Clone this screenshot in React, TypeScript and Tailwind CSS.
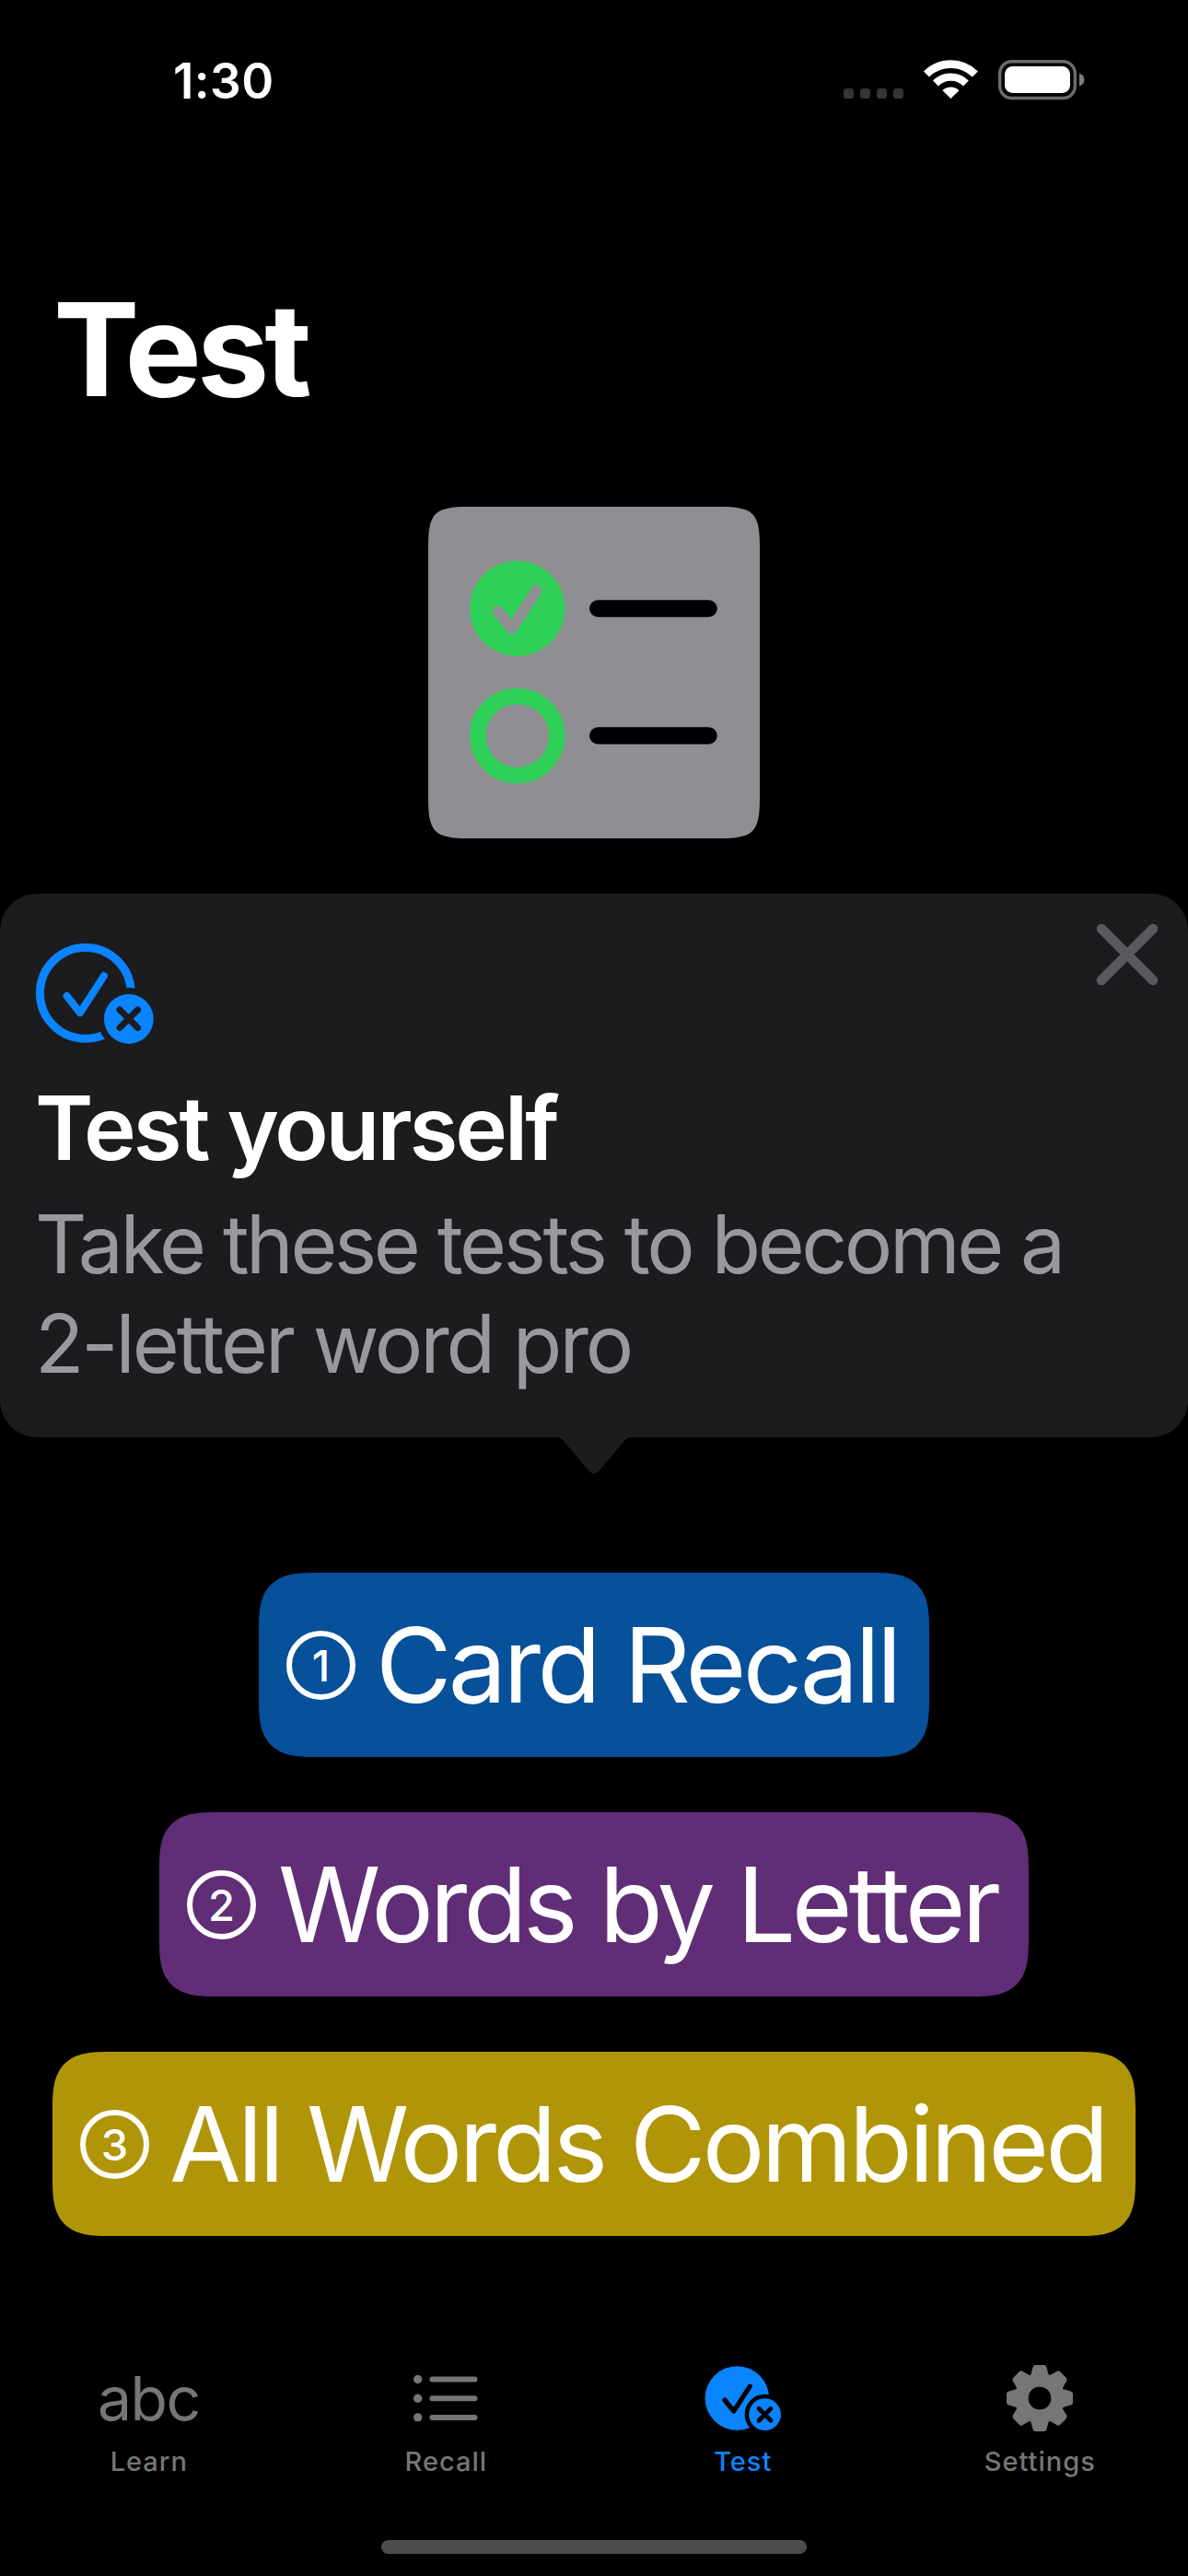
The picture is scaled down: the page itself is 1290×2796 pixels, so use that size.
import type { ReactNode } from 'react'

const StatusBar = () => (
  <div className="flex h-[176px] shrink-0 items-center justify-between pl-[188px] pr-[112px]">
    <span className="text-[53px] leading-[60px] font-semibold tracking-[0.4px]">1:30</span>
    <svg width="264" height="48" viewBox="914 64 264 48">
      {[916, 934, 952, 970].map((x) => (
        <rect key={x} x={x} y="96" width="11" height="11" rx="3.6" fill="#353535" />
      ))}
      <g fill="none" stroke="#fff">
        <path d="M1005.95 80.55A37.4 37.4 0 0 1 1058.85 80.55" strokeWidth="8.6" />
        <path d="M1015.9 90.5A23.3 23.3 0 0 1 1048.9 90.5" strokeWidth="8.2" />
      </g>
      <path d="M1032.4 107L1023.4 98.2A13 13 0 0 1 1041.4 98.2Z" fill="#fff" />
      <rect x="1085.7" y="66.7" width="81.6" height="39.8" rx="13" fill="none" stroke="#6b6b6b" strokeWidth="3.4" />
      <rect x="1091" y="72" width="71" height="29" rx="8.5" fill="#fff" />
      <path d="M1172 79.7a7 7 0 0 1 0 13.6z" fill="#7c7c7c" />
    </svg>
  </div>
)

const ChecklistIcon = () => (
  <svg width="360" height="360" viewBox="0 0 360 360">
    <path
      d="M44 0H316C353.3 0 360 6.7 360 44V316C360 353.3 353.3 360 316 360H44C6.7 360 0 353.3 0 316V44C0 6.7 6.7 0 44 0Z"
      fill="#8e8e93"
    />
    <circle cx="96.7" cy="110.4" r="51.7" fill="#30d158" />
    <path d="M75.7 113.8L90.8 132L117.3 91.2" fill="none" stroke="#8e8e93" strokeWidth="12" strokeLinecap="round" strokeLinejoin="round" />
    <circle cx="96.7" cy="248.6" r="43" fill="none" stroke="#30d158" strokeWidth="17.4" />
    <rect x="175" y="101.2" width="138.8" height="18.6" rx="9.3" fill="#000" />
    <rect x="175" y="239.2" width="138.8" height="18.6" rx="9.3" fill="#000" />
  </svg>
)

const TestOutlineIcon = () => (
  <svg width="132" height="120" viewBox="38 1020 132 120">
    <mask id="outline-cut">
      <rect x="38" y="1020" width="132" height="120" fill="#fff" />
      <circle cx="139.8" cy="1106" r="34" fill="#000" />
    </mask>
    <circle cx="92.8" cy="1077.9" r="49.4" fill="none" stroke="#0a84ff" strokeWidth="9" mask="url(#outline-cut)" />
    <path d="M72.6 1081L86.9 1099.3L112.9 1059.2" fill="none" stroke="#0a84ff" strokeWidth="8" strokeLinecap="round" strokeLinejoin="round" />
    <circle cx="139.8" cy="1106" r="26.9" fill="#0a84ff" />
    <path d="M130 1096L149.6 1115.6M149.6 1096L130 1115.6" stroke="#1c1c1e" strokeWidth="7" strokeLinecap="round" />
  </svg>
)

const TipCard = () => (
  <section className="relative mt-[60px] h-[590px] rounded-[40px] bg-[#1c1c1e] pt-[50px] pl-[38px]">
    <TestOutlineIcon />
    <h2 className="mt-[24px] text-[96px] leading-[120px] font-semibold tracking-[-3px]">Test yourself</h2>
    <p className="mt-[12px] text-[87.5px] leading-[108px] tracking-[-3.4px] text-[#98989f]">
      Take these tests to become a
      <br />
      <span className="tracking-[-3px]">2-letter word pro</span>
    </p>
    <button className="absolute top-[32px] right-[32px]" aria-label="Close">
      <svg width="68" height="68" viewBox="0 0 68 68">
        <path d="M6 6L62 62M62 6L6 62" stroke="#5a5a5e" strokeWidth="10.6" strokeLinecap="round" />
      </svg>
    </button>
    <svg className="absolute top-[589px] left-[605px]" width="80" height="42" viewBox="0 0 80 42">
      <path d="M0 0V1Q4 1 6.5 4.5L34 37Q40 44 46 37L73.5 4.5Q76 1 80 1V0Z" fill="#1c1c1e" />
    </svg>
  </section>
)

const tests = [
  { n: 1, title: 'Card Recall', style: 'w-[728px] bg-[#07509a] tracking-[-3.7px]', gap: 'ml-[22px]' },
  { n: 2, title: 'Words by Letter', style: 'w-[944px] bg-[#602d76] tracking-[-4.3px]', gap: 'ml-[24px]' },
  { n: 3, title: 'All Words Combined', style: 'w-[1176px] bg-[#b19508] tracking-[-3.9px]', gap: 'ml-[22px]' },
]

const TestButton = ({ n, title, style, gap }: (typeof tests)[number]) => (
  <button
    className={`flex h-[200px] items-center rounded-[47px] pl-[30px] text-[113px] leading-[140px] whitespace-nowrap supports-[corner-shape:squircle]:rounded-[64px] supports-[corner-shape:squircle]:[corner-shape:superellipse(1.6)] ${style}`}
  >
    <span className="flex size-[75px] shrink-0 items-center justify-center rounded-full border-[6px] border-white text-[47px] leading-none font-medium tracking-normal">
      {n}
    </span>
    <span className={gap}>{title}</span>
  </button>
)

const ListIcon = () => (
  <svg width="72" height="50" viewBox="447.75 2578.5 72 50" fill="#767676">
    {[2583, 2603.7, 2624.4].map((y) => (
      <g key={y}>
        <circle cx="453.4" cy={y} r="4.7" />
        <rect x="466.2" y={y - 3} width="52" height="6" rx="3" />
      </g>
    ))}
  </svg>
)

const TestFilledIcon = () => (
  <svg width="88" height="80" viewBox="762.25 2563.5 88 80">
    <mask id="filled-cut">
      <rect x="762" y="2563" width="89" height="81" fill="#fff" />
      <circle cx="830.8" cy="2621.2" r="22" fill="#000" />
      <path d="M787.2 2605.5L797 2617.7L814.5 2590.7" fill="none" stroke="#000" strokeWidth="5.2" strokeLinecap="round" strokeLinejoin="round" />
    </mask>
    <circle cx="800.6" cy="2603.5" r="34.8" fill="#0a84ff" mask="url(#filled-cut)" />
    <circle cx="830.8" cy="2621.2" r="17.4" fill="#0a84ff" />
    <path d="M824.3 2614.7L837.3 2627.7M837.3 2614.7L824.3 2627.7" stroke="#000" strokeWidth="4.8" strokeLinecap="round" />
  </svg>
)

const GearIcon = () => (
  <svg width="76" height="76" viewBox="-38 -38 76 76" fill="#767676">
    {[0, 45, 90, 135, 180, 225, 270, 315].map((deg) => (
      <path
        key={deg}
        transform={`rotate(${deg})`}
        d="M-12 -22Q-9 -26 -8.4 -30L-7.6 -33.5Q-7 -36 -4.5 -36H4.5Q7 -36 7.6 -33.5L8.4 -30Q9 -26 12 -22Z"
      />
    ))}
    <circle r="19.2" fill="none" stroke="#767676" strokeWidth="14" />
    <circle r="12.2" fill="#000" />
  </svg>
)

const Tab = ({ label, active, children }: { label: string; active?: boolean; children: ReactNode }) => (
  <div className={`flex flex-1 flex-col items-center ${active ? 'text-[#0a84ff]' : 'text-[#767676]'}`}>
    <div className="flex h-[86px] items-center justify-center">{children}</div>
    <span className="mt-[8px] pl-px text-[29px] leading-[36px] font-medium tracking-[1px]">{label}</span>
  </div>
)

const TabBar = () => (
  <nav className="mt-[133px] flex">
    <Tab label="Learn">
      <span className="text-[66px] leading-[80px] tracking-[-1.5px]">abc</span>
    </Tab>
    <Tab label="Recall">
      <ListIcon />
    </Tab>
    <Tab label="Test" active>
      <TestFilledIcon />
    </Tab>
    <Tab label="Settings">
      <GearIcon />
    </Tab>
  </nav>
)

export default function App() {
  return (
    <div className="flex h-[2796px] w-[1290px] flex-col overflow-hidden bg-black font-['Inter',sans-serif] text-white">
      <StatusBar />
      <h1 className="mt-[133px] pl-[58px] text-[140px] leading-[140px] font-bold tracking-[-5px]">Test</h1>
      <div className="mt-[101px] flex justify-center">
        <ChecklistIcon />
      </div>
      <TipCard />
      <div className="mt-[147px] flex flex-col items-center gap-[60px]">
        {tests.map((test) => (
          <TestButton key={test.n} {...test} />
        ))}
      </div>
      <TabBar />
      <div className="mx-auto mt-[67px] h-[15px] w-[462px] rounded-full bg-[#4c4c4c]" />
    </div>
  )
}
